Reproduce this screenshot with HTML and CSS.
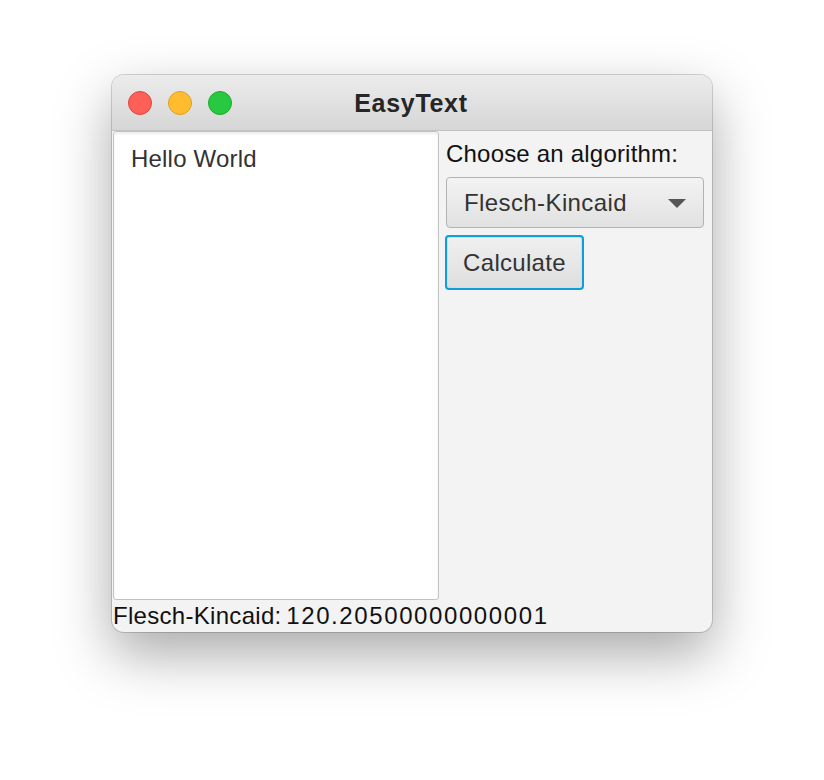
FILE: index.html
```html
<!DOCTYPE html>
<html>
<head>
<meta charset="utf-8">
<link rel="stylesheet" href="styles.css">
</head>
<body>
<div class="window">
  <div class="titlebar">
    <div class="lights">
      <span class="light red"></span>
      <span class="light yellow"></span>
      <span class="light green"></span>
    </div>
    <div class="title">EasyText</div>
  </div>
  <div class="content">
    <div class="main">
      <div class="textarea">Hello World</div>
      <div class="side">
        <div class="label">Choose an algorithm:</div>
        <div class="combo">
          <span>Flesch-Kincaid</span>
          <svg class="arrow" width="18" height="10" viewBox="0 0 18 10"><path d="M0 0 L18 0 L9 9 Z" fill="#555"/></svg>
        </div>
        <div class="btn">Calculate</div>
      </div>
    </div>
    <div class="result"><span class="res-name">Flesch-Kincaid:</span> <span class="res-num">120.20500000000001</span></div>
  </div>
</div>
</body>
</html>
```
FILE: styles.css
```css
html, body {
  margin: 0;
  padding: 0;
  background: #ffffff;
}
body {
  padding: 75px 0 0 112px;
  min-height: 780px;
  box-sizing: border-box;
  font-family: "Liberation Sans", Arial, sans-serif;
}
.window {
  width: 600px;
  height: 557px;
  border-radius: 12px;
  background: #f3f3f3;
  box-shadow: 0 0 0 1px rgba(0,0,0,0.16), 0 22px 55px rgba(0,0,0,0.34);
  overflow: hidden;
  display: flex;
  flex-direction: column;
}
.titlebar {
  height: 55px;
  border-bottom: 1px solid #c2c2c2;
  background: linear-gradient(#ececec, #d6d6d6);
  position: relative;
  display: flex;
  align-items: center;
  justify-content: center;
}
.lights {
  position: absolute;
  left: 16px;
  top: 16px;
  display: flex;
  gap: 16px;
}
.light {
  width: 24px;
  height: 24px;
  border-radius: 50%;
  box-sizing: border-box;
}
.red { background: #fe5f57; border: 1px solid #e0443e; }
.yellow { background: #febc2e; border: 1px solid #dea123; }
.green { background: #28c840; border: 1px solid #1aab29; }
.title {
  font-weight: bold;
  font-size: 25px;
  letter-spacing: 0.7px;
  color: #262626;
  margin-top: 1px;
  margin-left: -2px;
}
.content {
  flex: 1;
  display: flex;
  flex-direction: column;
}
.main {
  display: flex;
  padding-left: 1px;
  gap: 7px;
}
.textarea {
  width: 326px;
  height: 469px;
  box-sizing: border-box;
  background: #ffffff;
  border: 1px solid #c3c3c3;
  border-radius: 3px;
  box-shadow: inset 0 2px 3px rgba(0,0,0,0.08);
  padding: 13px 17px;
  font-size: 24px;
  color: #333333;
  letter-spacing: 0.2px;
}
.side {
  display: flex;
  flex-direction: column;
  align-items: flex-start;
  padding-top: 8px;
}
.label {
  font-size: 24px;
  color: #111111;
  height: 38px;
  line-height: 30px;
  letter-spacing: 0.2px;
}
.combo {
  width: 258px;
  height: 51px;
  box-sizing: border-box;
  border: 1px solid #b3b3b3;
  border-radius: 4px;
  background: linear-gradient(#f3f3f3, #e1e1e1);
  display: flex;
  align-items: center;
  justify-content: space-between;
  padding: 0 17px 0 17px;
  font-size: 24px;
  color: #333333;
  letter-spacing: 0.4px;
}
.arrow { margin-top: 2px; }
.btn {
  margin-top: 7px;
  margin-left: -1px;
  width: 139px;
  height: 55px;
  box-sizing: border-box;
  border: 2px solid #0f9ed8;
  border-radius: 4px;
  box-shadow: inset 0 0 0 1px #bfe4f3;
  background: linear-gradient(#f0f0f0, #dedede);
  display: flex;
  align-items: center;
  justify-content: center;
  font-size: 24px;
  color: #333333;
  letter-spacing: 0.3px;
}
.result {
  font-size: 24px;
  color: #111111;
  line-height: 30px;
  padding-left: 1px;
  margin-top: 1px;
  white-space: nowrap;
  word-spacing: -2px;
}
.res-name { letter-spacing: 0.3px; }
.res-num { letter-spacing: 1.6px; }
```
